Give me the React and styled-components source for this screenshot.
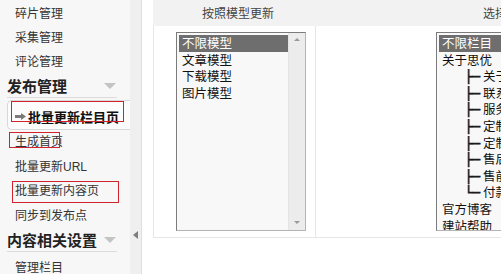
import React from "react";
import styled, { createGlobalStyle } from "styled-components";

const GlobalStyle = createGlobalStyle`
  html, body { margin: 0; padding: 0; overflow: hidden; background: #fff; }
  body { font-family: "Liberation Sans", "Noto Sans CJK SC", sans-serif; }
`;

const Page = styled.div`
  display: flex;
  width: 501px;
  height: 274px;
  overflow: hidden;
`;

const Sidebar = styled.nav`
  position: relative;
  flex: 0 0 130px;
  background: #f7f7f7;
  padding-top: 2px;
  box-sizing: border-box;
  overflow: hidden;
`;

const NavItem = styled.div`
  height: ${(p) => p.$h || 24}px;
  line-height: ${(p) => p.$h || 24}px;
  padding-left: 15px;
  padding-top: ${(p) => p.$pt || 0}px;
  font-size: 12px;
  color: #333;
  white-space: nowrap;
`;

const GroupHeader = styled.div`
  display: flex;
  align-items: center;
  justify-content: space-between;
  height: 23px;
  margin: 0 13px 0 7px;
  border-bottom: 1px solid #dcdcdc;
  font-size: 15px;
  font-weight: bold;
  color: #222;
  font-family: "Noto Sans CJK SC", sans-serif;
`;

const Caret = styled.span`
  width: 0;
  height: 0;
  margin-right: 1px;
  border-left: 6px solid transparent;
  border-right: 6px solid transparent;
  border-top: 6px solid #c4c4c4;
`;

const ActiveItem = styled.div`
  display: flex;
  align-items: center;
  gap: 2px;
  height: 30px;
  box-sizing: border-box;
  margin: 2px 0 0 7px;
  padding: 2px 0 0 7px;
  background: #fcfcfc;
  border: 1px solid #d8d8d8;
  border-right: none;
  border-radius: 5px 0 0 5px;
  font-size: 13px;
  font-weight: bold;
  color: #111;
  white-space: nowrap;
`;

const Mark = styled.div`
  position: absolute;
  left: ${(p) => p.$x}px;
  top: ${(p) => p.$y}px;
  width: ${(p) => p.$w}px;
  height: ${(p) => p.$h}px;
  box-sizing: border-box;
  border: 1px solid #d0232b;
  pointer-events: none;
`;

const Splitter = styled.div`
  flex: 0 0 12px;
  box-sizing: border-box;
  background: #efefef;
  border-right: 1px solid #dedede;
  padding: 231px 0 0 3px;
`;

const CollapseArrow = styled.div`
  width: 0;
  height: 0;
  border-top: 4px solid transparent;
  border-bottom: 4px solid transparent;
  border-right: 5px solid #7d7d7d;
`;

const Main = styled.main`
  flex: 1;
  padding-left: 11px;
  background: #fff;
  overflow: hidden;
`;

const Table = styled.div`
  width: 600px;
`;

const HeaderRow = styled.div`
  display: flex;
  height: 26px;
  background: #f2f2f2;
`;

const HeaderCell = styled.div`
  flex: 0 0 ${(p) => p.$w}px;
  text-align: center;
  line-height: 26px;
  font-size: 12px;
  color: #444;
  font-family: "Noto Sans CJK SC", sans-serif;
`;

const BodyRow = styled.div`
  display: flex;
  height: 212px;
  box-sizing: border-box;
  border-left: 1px solid #e6e6e6;
  border-bottom: 1px solid #e6e6e6;
`;

const BodyCell = styled.div`
  flex: 0 0 ${(p) => p.$w}px;
  box-sizing: border-box;
  padding: 6px 0 0 ${(p) => p.$pl}px;
  border-right: ${(p) => (p.$divider ? "1px solid #e6e6e6" : "none")};
`;

const ListBox = styled.div`
  display: flex;
  width: ${(p) => p.$w}px;
  height: 199px;
  box-sizing: border-box;
  background: #f8f8f8;
  border-top: 1px solid #7b7b7b;
  border-left: 1px solid #7b7b7b;
  border-right: 1px solid #b4b4b4;
  border-bottom: 1px solid #b4b4b4;
`;

const Options = styled.div`
  flex: 1;
  min-width: 0;
  padding: 2px 0 0 2px;
  overflow: hidden;
`;

const Option = styled.div`
  height: 16.6px;
  line-height: 16.6px;
  padding-left: 3px;
  font-size: 12.5px;
  font-family: "Noto Sans CJK SC", sans-serif;
  white-space: nowrap;
  color: ${(p) => (p.$selected ? "#fff" : "#111")};
  background: ${(p) => (p.$selected ? "#6e6e6e" : "transparent")};
`;

const Connector = styled.span`
  display: inline-block;
  margin: 0 3px 0 23px;
  font-family: "DejaVu Sans", sans-serif;
  font-weight: bold;
  color: #1a1a1a;
  -webkit-text-stroke: 0.6px #1a1a1a;
`;

const ScrollTrack = styled.div`
  flex: 0 0 17px;
  display: flex;
  flex-direction: column;
  justify-content: space-between;
  align-items: center;
  padding: 5px 0 6px;
  box-sizing: border-box;
  background: #ececec;
  border-left: 1px solid #e4e4e4;
`;

const ScrollArrow = styled.span`
  width: 0;
  height: 0;
  border-left: 3px solid transparent;
  border-right: 3px solid transparent;
  ${(p) =>
    p.$down
      ? "border-top: 3px solid #9a9a9a;"
      : "border-bottom: 3px solid #9a9a9a;"}
`;

const ArrowIcon = () => (
  <svg width="11" height="7" viewBox="0 0 11 7">
    <rect x="0" y="2" width="6" height="3" fill="#7a7a7a" />
    <polygon points="6,0 11,3.5 6,7" fill="#7a7a7a" />
  </svg>
);

const models = ["不限模型", "文章模型", "下载模型", "图片模型"];

const categories = [
  { name: "不限栏目", selected: true },
  { name: "关于思优" },
  { name: "关于我们", child: true },
  { name: "联系我们", child: true },
  { name: "服务条款", child: true },
  { name: "定制流程", child: true },
  { name: "定制须知", child: true },
  { name: "售后服务", child: true },
  { name: "售前咨询", child: true },
  { name: "付款方式", child: true, last: true },
  { name: "官方博客" },
  { name: "建站帮助" },
];

export default function App() {
  return (
    <>
      <GlobalStyle />
      <Page>
        <Sidebar>
          <NavItem>碎片管理</NavItem>
          <NavItem>采集管理</NavItem>
          <NavItem>评论管理</NavItem>
          <GroupHeader>
            发布管理
            <Caret />
          </GroupHeader>
          <ActiveItem>
            <ArrowIcon />
            批量更新栏目页
          </ActiveItem>
          <NavItem $h={24.5}>生成首页</NavItem>
          <NavItem $h={24.5}>批量更新URL</NavItem>
          <NavItem $h={24.5}>批量更新内容页</NavItem>
          <NavItem $h={24.5}>同步到发布点</NavItem>
          <GroupHeader>
            内容相关设置
            <Caret />
          </GroupHeader>
          <NavItem $pt={4}>管理栏目</NavItem>
          <Mark $x={11} $y={101} $w={113} $h={21} />
          <Mark $x={9} $y={132} $w={51} $h={16} />
          <Mark $x={12} $y={181} $w={107} $h={22} />
        </Sidebar>
        <Splitter>
          <CollapseArrow />
        </Splitter>
        <Main>
          <Table>
            <HeaderRow>
              <HeaderCell $w={170}>按照模型更新</HeaderCell>
              <HeaderCell $w={392}>选择栏目范围</HeaderCell>
            </HeaderRow>
            <BodyRow>
              <BodyCell $w={162} $pl={22} $divider>
                <ListBox $w={130}>
                  <Options>
                    {models.map((m, i) => (
                      <Option key={m} $selected={i === 0}>
                        {m}
                      </Option>
                    ))}
                  </Options>
                  <ScrollTrack>
                    <ScrollArrow />
                    <ScrollArrow $down />
                  </ScrollTrack>
                </ListBox>
              </BodyCell>
              <BodyCell $w={400} $pl={120}>
                <ListBox $w={166}>
                  <Options>
                    {categories.map((c) => (
                      <Option key={c.name} $selected={c.selected}>
                        {c.child && (
                          <Connector>{c.last ? "└─" : "├─"}</Connector>
                        )}
                        {c.name}
                      </Option>
                    ))}
                  </Options>
                  <ScrollTrack>
                    <ScrollArrow />
                    <ScrollArrow $down />
                  </ScrollTrack>
                </ListBox>
              </BodyCell>
            </BodyRow>
          </Table>
        </Main>
      </Page>
    </>
  );
}
